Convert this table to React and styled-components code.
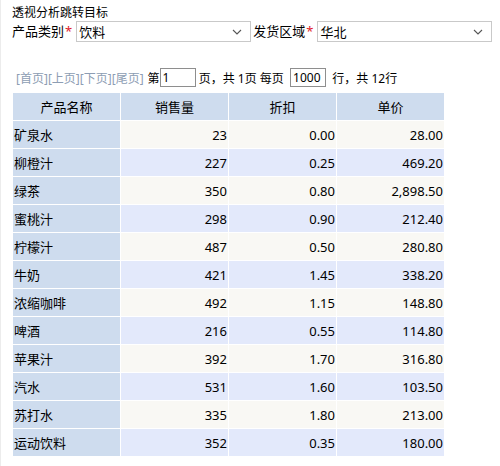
import React from "react";
import styled, { createGlobalStyle } from "styled-components";

const GlobalStyle = createGlobalStyle`
  body {
    margin: 0;
    background: #fff;
    font-family: "Noto Sans", "Noto Sans CJK SC", sans-serif;
    color: #000;
  }
`;

const Page = styled.div`
  border-left: 1px solid #ececec;
  padding-left: 11px;
  height: 466px;
  box-sizing: border-box;
`;

const Title = styled.div`
  font-size: 12px;
  line-height: 17px;
  padding-top: 4px;
`;

const FilterRow = styled.div`
  display: flex;
  align-items: center;
  height: 21px;
`;

const Label = styled.span`
  font-size: 13px;
  line-height: 21px;
  margin-right: 4px;
  margin-left: ${(p) => p.$gap || 0}px;
  white-space: nowrap;

  em {
    font-style: normal;
    color: #e0202a;
    margin-left: 1px;
  }
`;

const Select = styled.div`
  box-sizing: border-box;
  width: 175px;
  height: 21px;
  border: 1px solid #c9c9c9;
  display: flex;
  align-items: center;
  justify-content: space-between;
  padding: 0 8px 0 2px;
  font-size: 13px;
  background: #fff;
`;

const Pager = styled.div`
  display: flex;
  align-items: center;
  margin-top: 26px;
  padding-left: 4px;
  height: 19px;
  font-size: 12px;
  white-space: pre;
`;

const NavLinks = styled.span`
  color: #8d9db3;
  margin-right: 4px;
`;

const PageInput = styled.input`
  box-sizing: border-box;
  width: 36px;
  height: 19px;
  border: 1px solid #8e8e8e;
  padding: 0 2px;
  margin: 0;
  font-family: inherit;
  font-size: 12px;
  color: #000;
  outline: none;
`;

const Table = styled.table`
  border-collapse: separate;
  border-spacing: 1px;
  margin-top: 5px;
  font-size: 13px;
`;

const Th = styled.th`
  width: 107px;
  height: 27px;
  padding: 0;
  background: #cedcee;
  font-weight: normal;
  text-align: center;
`;

const Td = styled.td`
  height: 27px;
  padding: 0 1px 0 1px;
  text-align: ${(p) => (p.$name ? "left" : "right")};
  background: ${(p) =>
    p.$name ? "#cedcee" : p.$odd ? "#f9f8f4" : "#e3e9fb"};
`;

const Chevron = () => (
  <svg width="10" height="6" viewBox="0 0 10 6">
    <polyline
      points="1,1 5,5 9,1"
      fill="none"
      stroke="#555"
      strokeWidth="1.1"
    />
  </svg>
);

const rows = [
  ["矿泉水", 23, "0.00", "28.00"],
  ["柳橙汁", 227, "0.25", "469.20"],
  ["绿茶", 350, "0.80", "2,898.50"],
  ["蜜桃汁", 298, "0.90", "212.40"],
  ["柠檬汁", 487, "0.50", "280.80"],
  ["牛奶", 421, "1.45", "338.20"],
  ["浓缩咖啡", 492, "1.15", "148.80"],
  ["啤酒", 216, "0.55", "114.80"],
  ["苹果汁", 392, "1.70", "316.80"],
  ["汽水", 531, "1.60", "103.50"],
  ["苏打水", 335, "1.80", "213.00"],
  ["运动饮料", 352, "0.35", "180.00"],
];

export default function App() {
  return (
    <Page>
      <GlobalStyle />
      <Title>透视分析跳转目标</Title>
      <FilterRow>
        <Label>
          产品类别<em>*</em>
        </Label>
        <Select>
          <span>饮料</span>
          <Chevron />
        </Select>
        <Label $gap={2}>
          发货区域<em>*</em>
        </Label>
        <Select>
          <span>华北</span>
          <Chevron />
        </Select>
      </FilterRow>
      <Pager>
        <NavLinks>[首页][上页][下页][尾页]</NavLinks>
        <span>第</span>
        <PageInput defaultValue="1" />
        <span> 页，共 1页 每页  </span>
        <PageInput defaultValue="1000" />
        <span>  行，共 12行</span>
      </Pager>
      <Table>
        <thead>
          <tr>
            <Th>产品名称</Th>
            <Th>销售量</Th>
            <Th>折扣</Th>
            <Th>单价</Th>
          </tr>
        </thead>
        <tbody>
          {rows.map((r, i) => (
            <tr key={r[0]}>
              <Td $name>{r[0]}</Td>
              <Td $odd={i % 2 === 0}>{r[1]}</Td>
              <Td $odd={i % 2 === 0}>{r[2]}</Td>
              <Td $odd={i % 2 === 0}>{r[3]}</Td>
            </tr>
          ))}
        </tbody>
      </Table>
    </Page>
  );
}
